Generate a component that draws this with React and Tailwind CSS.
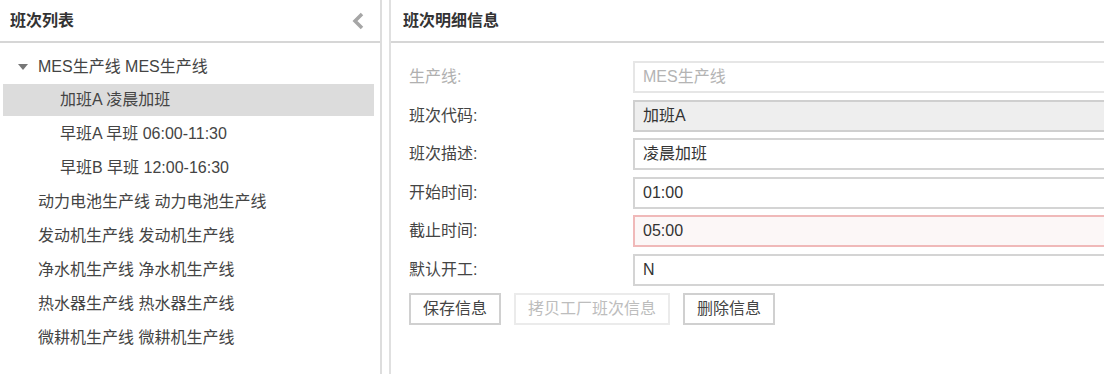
import React from "react";

const font = { fontFamily: '"Liberation Sans", "Noto Sans CJK SC", sans-serif' };

const children = [
  { text: "加班A 凌晨加班", selected: true },
  { text: "早班A 早班 06:00-11:30" },
  { text: "早班B 早班 12:00-16:30" },
];

const lines = [
  "动力电池生产线 动力电池生产线",
  "发动机生产线 发动机生产线",
  "净水机生产线 净水机生产线",
  "热水器生产线 热水器生产线",
  "微耕机生产线 微耕机生产线",
];

const fields = [
  { label: "生产线:", value: "MES生产线", kind: "disabled" },
  { label: "班次代码:", value: "加班A", kind: "readonly" },
  { label: "班次描述:", value: "凌晨加班" },
  { label: "开始时间:", value: "01:00" },
  { label: "截止时间:", value: "05:00", kind: "error" },
  { label: "默认开工:", value: "N" },
];

function Field({ label, value, kind }) {
  const labelColor = kind === "disabled" ? "text-[#b0b0b0]" : "text-[#444]";
  let box = "border-[#d4d4d4] bg-white text-[#333]";
  if (kind === "disabled") box = "border-[#e6e6e6] bg-white text-[#b4b4b4]";
  if (kind === "readonly") box = "border-[#cfcfcf] bg-[#eeeeee] text-[#333]";
  if (kind === "error") box = "border-[#f0b9b9] bg-[#fcf7f7] text-[#333]";
  return (
    <div className="flex items-center h-[32px]">
      <div className={`w-[224px] shrink-0 ${labelColor}`}>{label}</div>
      <div className={`w-[600px] shrink-0 h-[32px] flex items-center border-2 pl-[8px] ${box}`}>
        {value}
      </div>
    </div>
  );
}

export default function App() {
  return (
    <div
      className="w-[1106px] h-[374px] flex overflow-hidden bg-white text-[16px] text-[#444]"
      style={font}
    >
      <div className="w-[382px] shrink-0 border-r-2 border-[#dddddd] flex flex-col">
        <div className="h-[43px] shrink-0 flex items-center justify-between pl-[10px] pr-[15px] border-b-2 border-[#d6d6d6]">
          <span className="font-bold text-[#333]">班次列表</span>
          <svg width="14" height="20" viewBox="0 0 14 20">
            <polyline points="11,3 4,10 11,17" fill="none" stroke="#a6a6a6" strokeWidth="3.5" />
          </svg>
        </div>
        <div className="pt-[8px] pl-[3px] pr-[6px]">
          <div className="h-[32px] flex items-center">
            <svg width="10" height="6" viewBox="0 0 10 6" className="ml-[15px] mr-[10px]">
              <polygon points="0,0 10,0 5,6" fill="#777" />
            </svg>
            <span>MES生产线 MES生产线</span>
          </div>
          {children.map((c) => (
            <div key={c.text} className="h-[34px] py-[1px]">
              <div
                className={`h-[32px] flex items-center pl-[57px] ${
                  c.selected ? "bg-[#dcdcdc]" : ""
                }`}
              >
                {c.text}
              </div>
            </div>
          ))}
          {lines.map((t) => (
            <div key={t} className="h-[34px] flex items-center pl-[35px]">
              {t}
            </div>
          ))}
        </div>
      </div>
      <div className="w-[7px] shrink-0" />
      <div className="flex-1 mr-[2px] overflow-hidden border-l-2 border-[#e0e0e0] flex flex-col min-w-0">
        <div className="h-[43px] shrink-0 flex items-center pl-[12px] border-b-2 border-[#d6d6d6]">
          <span className="font-bold text-[#333]">班次明细信息</span>
        </div>
        <div className="pt-[18px] pl-[18px] flex flex-col gap-[6.6px]">
          {fields.map((f) => (
            <Field key={f.label} {...f} />
          ))}
          <div className="flex gap-[13px] mt-[0.4px]">
            <button className="h-[32px] w-[92px] border-2 border-[#d0d0d0] bg-white text-[#444]">
              保存信息
            </button>
            <button
              disabled
              className="h-[32px] w-[156px] border-2 border-[#ebebeb] bg-white text-[#bdbdbd]"
            >
              拷贝工厂班次信息
            </button>
            <button className="h-[32px] w-[92px] border-2 border-[#d0d0d0] bg-white text-[#444]">
              删除信息
            </button>
          </div>
        </div>
      </div>
    </div>
  );
}
